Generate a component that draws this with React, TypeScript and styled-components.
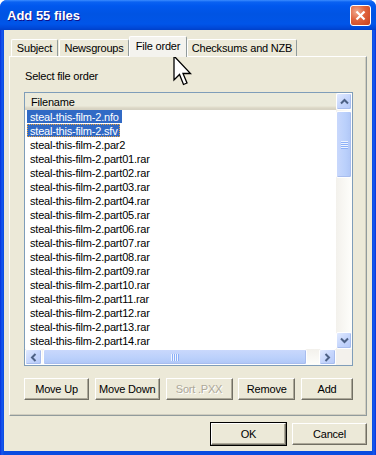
import * as React from "react";
import styled, { createGlobalStyle, css } from "styled-components";

const GlobalStyle = createGlobalStyle`
  html, body {
    margin: 0;
    padding: 0;
    background: #fff;
  }
  body {
    font-family: "Liberation Sans", Arial, sans-serif;
    font-size: 11px;
    letter-spacing: -0.2px;
    color: #000;
  }
`;

const files = [
  "steal-this-film-2.nfo",
  "steal-this-film-2.sfv",
  "steal-this-film-2.par2",
  ...Array.from({ length: 14 }, (_, i) =>
    `steal-this-film-2.part${String(i + 1).padStart(2, "0")}.rar`
  )
];

const tabs = [
  { label: "Subject", width: 47 },
  { label: "Newsgroups", width: 70 },
  { label: "File order", width: 58, active: true },
  { label: "Checksums and NZB", width: 110 }
];

const Window = styled.div`
  position: relative;
  width: 376px;
  height: 455px;
  display: flex;
  flex-direction: column;
  border-radius: 7px 7px 0 0;
  overflow: hidden;
  background: linear-gradient(to right, #0831d9 0, #1659f0 2px, #0a4be0 4px, #0a4be0 372px, #1659f0 374px, #0831d9 376px);
`;

const TitleBar = styled.div`
  height: 30px;
  flex: 0 0 30px;
  display: flex;
  align-items: center;
  justify-content: space-between;
  padding: 0 5px 0 7px;
  background: linear-gradient(
    to bottom,
    #3b8cff 0,
    #0a62f2 2px,
    #0058ee 6px,
    #0054e3 14px,
    #0055e9 24px,
    #0048d8 28px,
    #0040c8 30px
  );
`;

const Title = styled.span`
  color: #fff;
  font-weight: bold;
  font-size: 13px;
  letter-spacing: 0;
  text-shadow: 1px 1px 0 #0f1089;
  margin-top: 1px;
`;

const CloseButton = styled.div`
  width: 21px;
  height: 21px;
  box-sizing: border-box;
  border: 1px solid #fff;
  border-radius: 3px;
  background: radial-gradient(circle at 30% 30%, #f0a98f 0, #e0633c 45%, #c8401c 100%);
  display: flex;
  align-items: center;
  justify-content: center;
`;

const Client = styled.div`
  flex: 1;
  margin: 0 4px 4px;
  background: #ece9d8;
  padding: 6px 5px 6px 5px;
  display: flex;
  flex-direction: column;
`;

const TabStrip = styled.div`
  position: relative;
  z-index: 1;
  height: 21px;
  display: flex;
  align-items: flex-end;
  padding-left: 2px;
  margin-bottom: -1px;
`;

const Tab = styled.div<{ $w: number; $active?: boolean }>`
  box-sizing: border-box;
  width: ${p => p.$w}px;
  height: 17px;
  margin: 0 1px 1px 0;
  display: flex;
  align-items: center;
  justify-content: center;
  background: #ece9d8;
  border-top: 1px solid #fff;
  border-left: 1px solid #fff;
  border-right: 1px solid #919b9c;
  border-radius: 2px 2px 0 0;
  white-space: nowrap;
  ${p =>
    p.$active &&
    css`
      height: 21px;
      margin: 0 0 0 -1px;
      padding-bottom: 3px;
      background: #f4f3ee;
      border-top-color: #fff;
    `}
`;

const Panel = styled.div`
  flex: 1;
  display: flex;
  flex-direction: column;
  padding: 13px 13px 0 14px;
  border: 1px solid;
  border-color: #fff #919b9c #919b9c #fff;
  box-shadow: inset -1px -1px 0 #d0cdbf;
`;

const Label = styled.div`
  height: 13px;
  line-height: 13px;
  margin-left: 1px;
`;

const ListView = styled.div`
  margin-top: 9px;
  height: 274px;
  box-sizing: border-box;
  border: 1px solid #7f9db9;
  display: grid;
  grid-template-columns: 1fr 16px;
  grid-template-rows: 1fr 16px;
  background: #fff;
`;

const ListBody = styled.div`
  overflow: hidden;
  background: #fff;
`;

const Header = styled.div`
  height: 17px;
  box-sizing: border-box;
  display: flex;
  align-items: center;
  padding-left: 6px;
  background: linear-gradient(to bottom, #ebeadb 0, #ebeadb 13px, #e2decd 14px, #d6d2c2 16px);
`;

const Row = styled.div`
  height: 14px;
  padding-left: 2px;
  display: flex;
  align-items: flex-start;
`;

const RowText = styled.span<{ $selected?: boolean; $focus?: boolean }>`
  box-sizing: border-box;
  height: 13px;
  line-height: 12px;
  padding: 0 2px;
  white-space: nowrap;
  border: 1px solid transparent;
  ${p =>
    p.$selected &&
    css`
      background: #316ac5;
      color: #fff;
    `}
  ${p =>
    p.$focus &&
    css`
      border: 1px dotted #e8a03c;
    `}
`;

const VScroll = styled.div`
  display: flex;
  flex-direction: column;
  background: linear-gradient(to right, #f3f1ec, #fefefb);
`;

const HScroll = styled.div`
  display: flex;
  background: linear-gradient(to bottom, #f3f1ec, #fefefb);
`;

const Corner = styled.div`
  background: #f3f1ec;
`;

const ScrollButton = styled.div<{ $w: number; $h: number }>`
  box-sizing: border-box;
  width: ${p => p.$w}px;
  height: ${p => p.$h}px;
  flex: 0 0 auto;
  border: 1px solid #fff;
  border-radius: 2px;
  background: linear-gradient(135deg, #e1eaff 0, #c6d6fc 50%, #b5c9f8 100%);
  box-shadow: inset -1px -1px 0 #a8bdee;
  display: flex;
  align-items: center;
  justify-content: center;
`;

const Thumb = styled.div<{ $vertical?: boolean; $size: number }>`
  box-sizing: border-box;
  flex: 0 0 auto;
  border: 1px solid #fff;
  border-radius: 2px;
  box-shadow: inset -1px -1px 0 #a8bdee;
  display: flex;
  align-items: center;
  justify-content: center;
  ${p =>
    p.$vertical
      ? css`
          width: 16px;
          height: ${p.$size}px;
          margin-top: 1px;
          background: linear-gradient(to right, #c9d8fc, #bad0fb 60%, #b0c6f6);
        `
      : css`
          height: 16px;
          width: ${p.$size}px;
          margin-left: 1px;
          background: linear-gradient(to bottom, #c9d8fc, #bad0fb 60%, #b0c6f6);
        `}
`;

const Spacer = styled.div`
  flex: 1;
`;

const ButtonRow = styled.div`
  margin-top: 12px;
  display: flex;
  justify-content: space-between;
`;

const Button = styled.div<{ $w: number; $default?: boolean; $disabled?: boolean }>`
  box-sizing: border-box;
  width: ${p => p.$w}px;
  height: 22px;
  display: flex;
  align-items: center;
  justify-content: center;
  background: #ece9d8;
  border: 1px solid;
  border-color: #fff #716f64 #716f64 #fff;
  box-shadow: inset -1px -1px 0 #aca899;
  white-space: nowrap;
  color: ${p => (p.$disabled ? "#aca899" : "#000")};
  ${p =>
    p.$disabled &&
    css`
      text-shadow: 1px 1px 0 #fff;
    `}
  ${p =>
    p.$default &&
    css`
      outline: 1px solid #000;
      border-color: #fff #716f64 #716f64 #fff;
    `}
`;

const DialogButtons = styled.div`
  margin-top: 7px;
  display: flex;
  justify-content: flex-end;
  gap: 6px;

  ${Button} {
    height: 22px;
  }
`;

const Cursor = styled.svg`
  position: absolute;
  left: 173px;
  top: 55px;
  pointer-events: none;
`;

const Chevron = ({ dir }: { dir: "up" | "down" | "left" | "right" }) => {
  const rot = { up: 0, right: 90, down: 180, left: 270 }[dir];
  return (
    <svg width="9" height="9" viewBox="0 0 9 9">
      <path
        d="M1 6.5 L4.5 3 L8 6.5"
        fill="none"
        stroke="#4d6185"
        strokeWidth="2"
        transform={`rotate(${rot} 4.5 4.5)`}
      />
    </svg>
  );
};

const Grip = ({ vertical }: { vertical?: boolean }) => (
  <svg width={vertical ? 7 : 8} height={vertical ? 8 : 7} viewBox={vertical ? "0 0 7 8" : "0 0 8 7"}>
    {[0, 2, 4, 6].map(i =>
      vertical ? (
        <g key={i}>
          <rect x="0" y={i} width="7" height="1" fill="#eef4fe" />
          <rect x="0" y={i + 1} width="7" height="1" fill="#8cb0f8" />
        </g>
      ) : (
        <g key={i}>
          <rect x={i} y="0" width="1" height="7" fill="#eef4fe" />
          <rect x={i + 1} y="0" width="1" height="7" fill="#8cb0f8" />
        </g>
      )
    )}
  </svg>
);

const App: React.FC = () => (
  <>
    <GlobalStyle />
    <Window>
      <TitleBar>
        <Title>Add 55 files</Title>
        <CloseButton>
          <svg width="11" height="11" viewBox="0 0 11 11">
            <path d="M1.5 1.5 L9.5 9.5 M9.5 1.5 L1.5 9.5" stroke="#fff" strokeWidth="2.2" />
          </svg>
        </CloseButton>
      </TitleBar>
      <Client>
        <TabStrip>
          {tabs.map(t => (
            <Tab key={t.label} $w={t.width} $active={t.active}>
              {t.label}
            </Tab>
          ))}
        </TabStrip>
        <Panel>
          <Label>Select file order</Label>
          <ListView>
            <ListBody>
              <Header>Filename</Header>
              {files.map((f, i) => (
                <Row key={f}>
                  <RowText $selected={i < 2} $focus={i === 1}>
                    {f}
                  </RowText>
                </Row>
              ))}
            </ListBody>
            <VScroll>
              <ScrollButton $w={16} $h={17}>
                <Chevron dir="up" />
              </ScrollButton>
              <Thumb $vertical $size={67}>
                <Grip vertical />
              </Thumb>
              <Spacer />
              <ScrollButton $w={16} $h={17}>
                <Chevron dir="down" />
              </ScrollButton>
            </VScroll>
            <HScroll>
              <ScrollButton $w={17} $h={16}>
                <Chevron dir="left" />
              </ScrollButton>
              <Thumb $size={264}>
                <Grip />
              </Thumb>
              <Spacer />
              <ScrollButton $w={17} $h={16}>
                <Chevron dir="right" />
              </ScrollButton>
            </HScroll>
            <Corner />
          </ListView>
          <ButtonRow>
            <Button $w={65}>Move Up</Button>
            <Button $w={65}>Move Down</Button>
            <Button $w={67} $disabled>
              Sort .PXX
            </Button>
            <Button $w={57}>Remove</Button>
            <Button $w={52}>Add</Button>
          </ButtonRow>
        </Panel>
        <DialogButtons>
          <Button $w={75} $default>
            OK
          </Button>
          <Button $w={75}>Cancel</Button>
        </DialogButtons>
      </Client>
      <Cursor width="20" height="32" viewBox="0 0 20 32">
        <path
          d="M1 1 L1 25 L6.5 19.5 L10.5 29.5 L14 28 L10 18.5 L17.5 18.5 Z"
          fill="#fff"
          stroke="#000"
          strokeWidth="1.3"
          strokeLinejoin="miter"
        />
      </Cursor>
    </Window>
  </>
);

export default App;
